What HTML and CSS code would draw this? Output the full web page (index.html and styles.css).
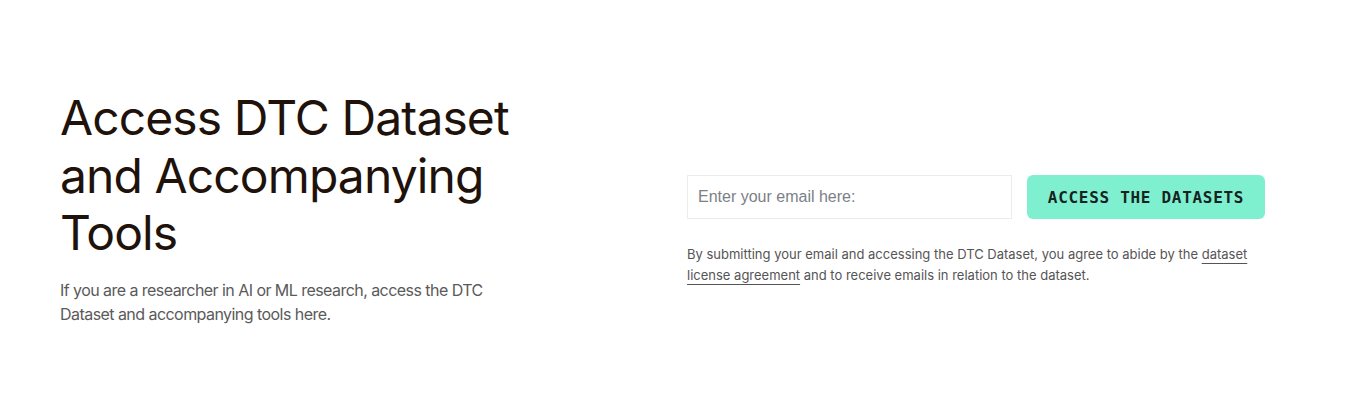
FILE: index.html
```html
<!DOCTYPE html>
<html lang="en">
<head>
<meta charset="utf-8">
<title>Access DTC Dataset</title>
<link rel="stylesheet" href="styles.css">
</head>
<body>
<section class="access">
  <div class="intro">
    <h1 class="title">Access DTC Dataset and Accompanying Tools</h1>
    <p class="lead">If you are a researcher in AI or ML research, access the DTC Dataset and accompanying tools here.</p>
  </div>
  <div class="signup">
    <form class="form">
      <input class="email" type="email" placeholder="Enter your email here:">
      <button class="submit" type="button">ACCESS THE DATASETS</button>
    </form>
    <p class="legal">By submitting your email and accessing the DTC Dataset, you agree to abide by the <a href="#" class="link">dataset license agreement</a> and to receive emails in relation to the dataset.</p>
  </div>
</section>
</body>
</html>
```
FILE: styles.css
```css
* { box-sizing: border-box; }
html, body { margin: 0; background: #ffffff; }
body { font-family: Inter, "Liberation Sans", sans-serif; }

.access {
  display: grid;
  grid-template-columns: 627px 1fr;
  padding: 89px 60px 0;
}

.intro { max-width: 480px; }

.title {
  margin: 0;
  font-size: 48px;
  line-height: 57.6px;
  font-weight: 400;
  color: #1f120b;
  letter-spacing: -0.9px;
}

.lead {
  margin: 16px 0 0;
  font-size: 16px;
  line-height: 24px;
  color: #5a5a5a;
  letter-spacing: -0.55px;
}

.signup { padding-top: 86px; }

.form {
  display: flex;
  gap: 15px;
  margin: 0;
}

.email {
  width: 325px;
  height: 44px;
  border: 1px solid #ececec;
  border-radius: 0;
  padding: 0 10px;
  font-family: "Liberation Sans", Arial, sans-serif;
  font-size: 16px;
  color: #333;
  outline: none;
}
.email::placeholder { color: #7c7f87; }

.submit {
  width: 238px;
  height: 44px;
  border: 0;
  border-radius: 6px;
  background: #7ff0cf;
  color: #16231f;
  font-family: "DejaVu Sans Mono", "Liberation Mono", monospace;
  font-weight: 700;
  font-size: 16px;
  letter-spacing: 0.7px;
  cursor: pointer;
}

.legal {
  margin: 25px 0 0;
  max-width: 578px;
  font-size: 13px;
  line-height: 21px;
  color: #555555;
}

.link {
  color: #555555;
  text-decoration: underline;
  text-underline-offset: 4px;
  text-decoration-thickness: 1px;
}
```
